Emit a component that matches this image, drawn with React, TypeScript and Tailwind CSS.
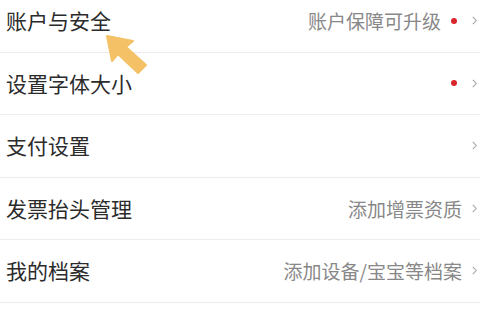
import React from "react";

const rows = [
  { title: "账户与安全", hint: "账户保障可升级", dot: true },
  { title: "设置字体大小", hint: "", dot: true },
  { title: "支付设置", hint: "", dot: false },
  { title: "发票抬头管理", hint: "添加增票资质", dot: false },
  { title: "我的档案", hint: "添加设备/宝宝等档案", dot: false },
  { title: "", hint: "", dot: false },
];

const Chevron = () => (
  <svg width="5" height="9" viewBox="0 0 5 9" className="shrink-0">
    <path d="M0.8 0.8 L4.2 4.5 L0.8 8.2" fill="none" stroke="#a8a8a8" strokeWidth="1.1" />
  </svg>
);

const App = () => {
  return (
    <div
      className="relative w-[480px] h-[320px] overflow-hidden bg-white"
      style={{ fontFamily: '"Noto Sans CJK SC", "Noto Sans", sans-serif' }}
    >
      <div className="-mt-[10px]">
        {rows.map((row, i) => (
          <div
            key={i}
            className="flex items-center h-[62.5px] border-b border-[#ececec] pl-[6px] pr-[3px]"
          >
            <span className="text-[21px] text-[#2b2b2b] leading-none">{row.title}</span>
            <div className="flex-1" />
            {row.hint && (
              <span className="text-[19px] text-[#888] leading-none mr-[10px]">{row.hint}</span>
            )}
            {row.dot && <span className="w-[6px] h-[6px] rounded-full bg-[#d8262c] mr-[15px]" />}
            {row.title && <Chevron />}
          </div>
        ))}
      </div>

      {/* pointer arrow */}
      <svg
        className="absolute left-[100px] top-[30px]"
        width="52"
        height="48"
        viewBox="0 0 52 48"
      >
        <polygon
          points="7,6 33,11 26,17 46,35 38,43 18,24 12,31"
          fill="#f5c166"
          stroke="#f5c166"
          strokeLinejoin="round"
          strokeWidth="2"
        />
      </svg>
    </div>
  );
};

export default App;
